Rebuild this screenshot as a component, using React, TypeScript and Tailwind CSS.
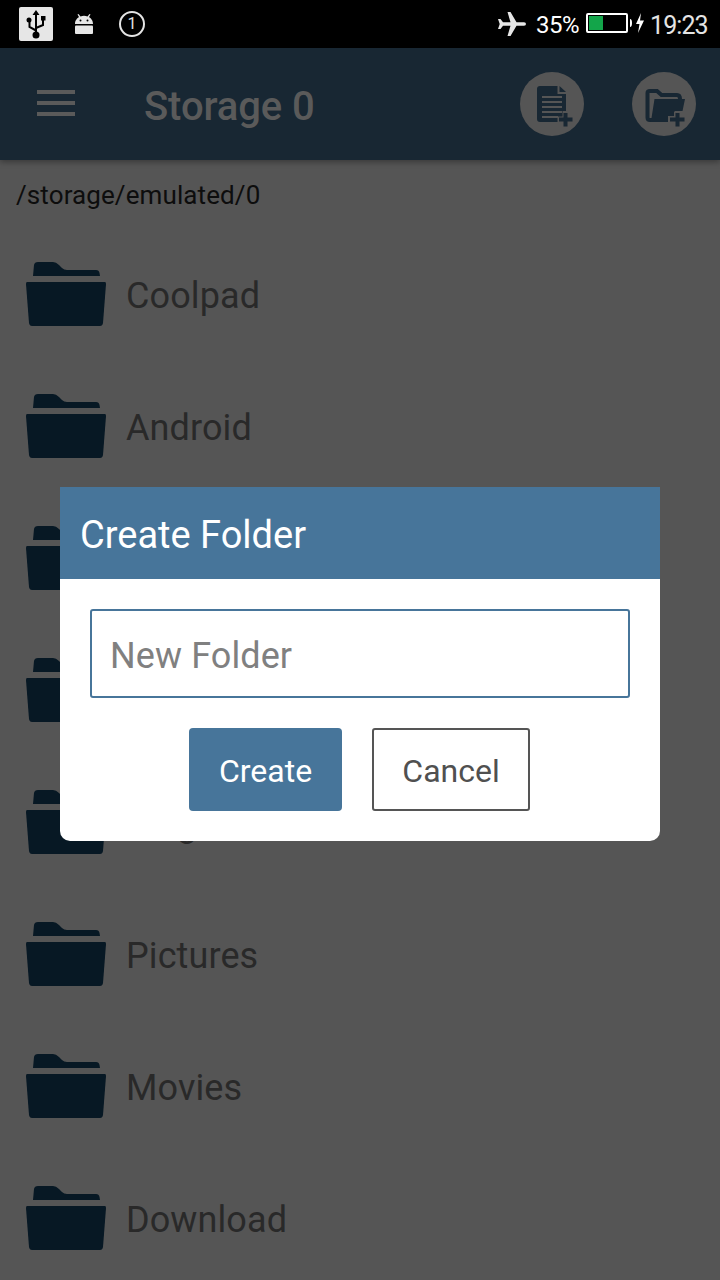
import React from "react";

const folders = ["Coolpad", "Android", "", "", "Ringtones", "Pictures", "Movies", "Download"];

function FolderIcon() {
  return (
    <svg width="80" height="64" viewBox="0 0 80 64" fill="#071824" className="shrink-0">
      <path d="M7 14 L8 3 Q8.500 0 12 0 H27 Q30 0 33 3 L36 6 Q38 8 41 8 H70 Q73 8 73.500 11 L74 14 Z" />
      <path d="M1 20 H79 Q80 20 80 22 L77 61 Q76.500 64 74 64 H6 Q3.500 64 3 61 L0 22 Q0 20 1 20 Z" />
    </svg>
  );
}

function StatusBar() {
  return (
    <div className="flex h-12 shrink-0 items-center bg-black pl-[19px] pr-3 text-[#e4e4e4]">
      <svg width="34" height="34" viewBox="0 0 34 34" className="shrink-0">
        <rect width="34" height="34" rx="2" fill="#e6e6e6" />
        <g fill="none" stroke="#000" strokeWidth="2">
          <path d="M17 28 V6 M17 23.500 L10.500 20 V13 M17 21 L24 18 V11" />
        </g>
        <path d="M17 3 L20.500 8 H13.500 Z M22 9 h4.500 v4.500 h-4.500 Z" />
        <circle cx="10" cy="13" r="2.500" />
        <circle cx="17" cy="28" r="3.500" />
      </svg>
      <svg width="18" height="20" viewBox="0 0 18 20" className="ml-[22px] shrink-0" fill="#e6e6e6">
        <path d="M0 10 C0 6 2.500 4 4 3 L2.500 .5 L3.500 0 L5.500 2.500 Q9 1.200 12.500 2.500 L14.500 0 L15.500 .5 L14 3 C15.500 4 18 6 18 10 Z" />
        <rect y="11.500" width="18" height="8.500" rx="1" />
        <circle cx="5.500" cy="6.500" r="1" fill="#000" />
        <circle cx="12.500" cy="6.500" r="1" fill="#000" />
      </svg>
      <div className="ml-[26px] flex h-[26px] w-[26px] items-center justify-center rounded-full border-2 border-[#e4e4e4] text-base leading-none">1</div>
      <div className="flex-1" />
      <svg width="28" height="24" viewBox="0 0 28 24" fill="#e6e6e6" className="shrink-0">
        <path d="M28 12 Q28 10.300 26 10.300 H18.500 L12.500 0 H9.500 L12.500 10.300 H5 L2.500 7 H0 L1.700 12 L0 17 H2.500 L5 13.700 H12.500 L9.500 24 H12.500 L18.500 13.700 H26 Q28 13.700 28 12 Z" />
      </svg>
      <span className="ml-[10px] w-[44px] whitespace-nowrap pt-0.5 text-2xl leading-none tracking-[-0.5px] text-white">35%</span>
      <svg width="58" height="22" viewBox="0 0 58 22" className="-mt-0.5 ml-[6px] shrink-0">
        <rect x="1" y="2" width="40" height="18" rx="1" fill="none" stroke="#fff" strokeWidth="2" />
        <rect x="3" y="4" width="14" height="14" fill="#13a54a" />
        <path d="M44 7 q2 0 2 4 t-2 4 Z" fill="#fff" />
        <path d="M55 1 L50 12 H53.500 L52 21 L58 8.500 H54 Z" fill="#fff" />
      </svg>
      <span className="ml-[6px] w-[58px] whitespace-nowrap pt-0.5 text-[25px] leading-none tracking-[-0.9px]">19:23</span>
    </div>
  );
}

function NewFileButton() {
  return (
    <button className="h-16 w-16 shrink-0">
      <svg width="64" height="64" viewBox="0 0 64 64">
        <circle cx="32" cy="32" r="32" fill="#555" />
        <path d="M20 14 H37.500 V22 H46 V39 H42.500 V44.500 H37.500 V50 H20 Q17 50 17 47 V17 Q17 14 20 14 Z" fill="#182733" />
        <path d="M39.500 14 V20 H46 Z" fill="#182733" />
        <path d="M22 25 H42 M22 30 H42 M22 35 H42 M22 40 H42 M22 45 H38" stroke="#555" strokeWidth="2" />
        <path d="M45.500 41 V54.500 M39 47.500 H52.500" stroke="#182733" strokeWidth="4" />
      </svg>
    </button>
  );
}

function NewFolderButton() {
  return (
    <button className="ml-12 h-16 w-16 shrink-0">
      <svg width="64" height="64" viewBox="0 0 64 64">
        <circle cx="32" cy="32" r="32" fill="#555" />
        <path d="M34 48 H18 Q15.500 48 15.500 45.500 V21 Q15.500 19 18 19 H25 L29.500 23 H45 Q48 23 48 27" fill="none" stroke="#182733" strokeWidth="4" />
        <path d="M22.500 27 H53 L50.500 39 H42.500 V44 H36 V50 H18 L19.500 46 Z" fill="#182733" />
        <path d="M45.500 40 V55 M38 47.500 H53" stroke="#555" strokeWidth="7" />
        <path d="M45.500 41 V54.500 M38 47.500 H52.500" stroke="#182733" strokeWidth="4" />
      </svg>
    </button>
  );
}

export default function App() {
  return (
    <div className="relative flex h-[1280px] w-[720px] flex-col overflow-hidden bg-[#555] font-['Roboto',sans-serif]">
      <StatusBar />
      <header className="z-10 flex h-28 shrink-0 items-center bg-[#182733] pl-[37px] pr-6 shadow-[0_2px_6px_rgba(0,0,0,0.35)]">
        <button className="mb-0.5 flex w-[38px] flex-col gap-[7px]">
          <span className="h-1 bg-[#5a5a5a]" />
          <span className="h-1 bg-[#5a5a5a]" />
          <span className="h-1 bg-[#5a5a5a]" />
        </button>
        <h1 className="ml-[69px] flex-1 pt-1.5 text-[40px] font-medium leading-none tracking-[-0.1px] text-[#5a5a5a]">Storage 0</h1>
        <NewFileButton />
        <NewFolderButton />
      </header>
      <div className="flex h-[68px] shrink-0 items-center px-4 pt-0.5 text-[26px] leading-none tracking-[0.1px] text-[#0d0d0d]">/storage/emulated/0</div>
      <main className="shrink-0">
        {folders.map((name, i) => (
          <div key={i} className="flex h-[132px] items-center gap-5 pl-[26px]">
            <FolderIcon />
            <span className="pt-1 text-4xl leading-none tracking-[0.1px] text-[#292929]">{name}</span>
          </div>
        ))}
      </main>
      <section role="dialog" className="absolute left-[60px] top-[487px] z-20 flex h-[354px] w-[600px] flex-col overflow-hidden rounded-b-[10px] bg-white">
        <h2 className="flex h-[92px] shrink-0 items-center bg-[#47759a] px-5 pt-1 text-[38px] leading-none text-white">Create Folder</h2>
        <div className="mx-[30px] mt-[30px] flex h-[89px] items-center rounded-[3px] border-2 border-[#47759a] px-[18px] pt-1 text-4xl leading-none tracking-[0.1px] text-[#808080]">New Folder</div>
        <div className="ml-[129px] mt-[30px] flex gap-[30px] text-[32px] leading-none">
          <button className="flex h-[83px] w-[153px] items-center justify-center rounded-[4px] bg-[#47759a] pt-0.5 text-white">Create</button>
          <button className="flex h-[83px] w-[158px] items-center justify-center rounded-[3px] border-2 border-[#555] pt-0.5 text-[#505050]">Cancel</button>
        </div>
      </section>
    </div>
  );
}
